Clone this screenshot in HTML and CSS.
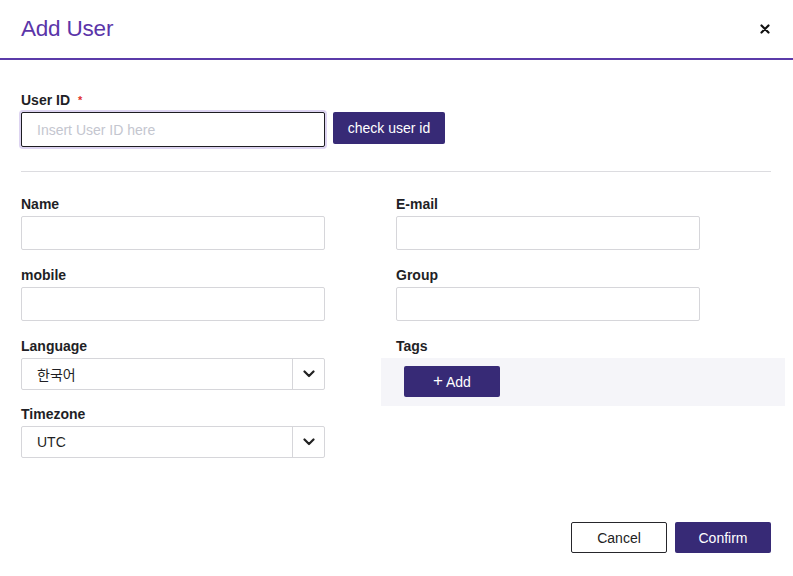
FILE: index.html
```html
<!DOCTYPE html>
<html>
<head>
<meta charset="utf-8">
<link rel="stylesheet" href="styles.css">
</head>
<body>
<div class="modal">
  <header class="modal-header">
    <h1 class="title">Add User</h1>
    <button class="close" aria-label="close">
      <svg width="10" height="10" viewBox="0 0 10 10"><path d="M1.5 1.5 L8.5 8.5 M8.5 1.5 L1.5 8.5" stroke="#111" stroke-width="2.2" stroke-linecap="round"/></svg>
    </button>
  </header>
  <main class="modal-body">
    <div class="field">
      <label class="label">User ID <span class="req">*</span></label>
      <div class="id-row">
        <input class="input input-focus" type="text" placeholder="Insert User ID here">
        <button class="btn btn-primary btn-check">check user id</button>
      </div>
    </div>
    <hr class="divider">
    <div class="cols">
      <div class="col">
        <div class="field">
          <label class="label">Name</label>
          <input class="input" type="text">
        </div>
        <div class="field">
          <label class="label">mobile</label>
          <input class="input" type="text">
        </div>
        <div class="field">
          <label class="label">Language</label>
          <div class="select">
            <span class="select-value">한국어</span>
            <span class="select-arrow"><svg width="12" height="8" viewBox="0 0 12 8"><path d="M1.5 1.5 L6 6 L10.5 1.5" fill="none" stroke="#222" stroke-width="2.2" stroke-linecap="round" stroke-linejoin="round"/></svg></span>
          </div>
        </div>
        <div class="field field-tz">
          <label class="label">Timezone</label>
          <div class="select">
            <span class="select-value">UTC</span>
            <span class="select-arrow"><svg width="12" height="8" viewBox="0 0 12 8"><path d="M1.5 1.5 L6 6 L10.5 1.5" fill="none" stroke="#222" stroke-width="2.2" stroke-linecap="round" stroke-linejoin="round"/></svg></span>
          </div>
        </div>
      </div>
      <div class="col">
        <div class="field">
          <label class="label">E-mail</label>
          <input class="input" type="text">
        </div>
        <div class="field">
          <label class="label">Group</label>
          <input class="input" type="text">
        </div>
        <div class="field">
          <label class="label">Tags</label>
          <div class="tags-box">
            <button class="btn btn-primary btn-add"><span class="plus">+</span>Add</button>
          </div>
        </div>
      </div>
    </div>
  </main>
  <footer class="modal-footer">
    <button class="btn btn-outline">Cancel</button>
    <button class="btn btn-primary btn-confirm">Confirm</button>
  </footer>
</div>
</body>
</html>
```
FILE: styles.css
```css
* { box-sizing: border-box; }
html, body { margin: 0; padding: 0; background: #fff; }
body {
  font-family: "Liberation Sans", Arial, "Noto Sans CJK KR", sans-serif;
  color: #1f1f24;
  width: 793px;
  height: 576px;
  overflow: hidden;
}
.modal {
  display: flex;
  flex-direction: column;
  height: 576px;
}
.modal-header {
  height: 60px;
  border-bottom: 2px solid #5b3ba9;
  display: flex;
  align-items: center;
  justify-content: space-between;
  padding: 0 22px 0 21px;
}
.title {
  margin: 0;
  font-size: 22.5px;
  font-weight: normal;
  color: #5b35a9;
  letter-spacing: -0.2px;
}
.close {
  border: 0;
  background: none;
  padding: 0;
  width: 14px;
  height: 14px;
  display: flex;
  align-items: center;
  justify-content: center;
  margin-right: -1px;
}
.modal-body {
  padding: 32px 22px 0 21px;
}
.field {
  display: flex;
  flex-direction: column;
  gap: 4px;
}
.label {
  font-size: 14px;
  line-height: 16px;
  font-weight: bold;
  color: #1f1f26;
}
.req {
  color: #e0302a;
  font-size: 11px;
  vertical-align: top;
  margin-left: 4px;
}
.id-row {
  display: flex;
  align-items: flex-start;
  gap: 8px;
}
.input {
  width: 304px;
  height: 34px;
  border: 1px solid #d6d6da;
  border-radius: 2px;
  font-family: inherit;
  font-size: 14px;
  padding: 0 15px;
  background: #fff;
  outline: none;
}
.input-focus {
  border-color: #1d1d22;
  box-shadow: 0 0 0 2px #ddd4f1;
  height: 35px;
}
.input::placeholder { color: #c4c6cf; }
.btn {
  font-family: inherit;
  font-size: 14px;
  border-radius: 2px;
  cursor: pointer;
}
.btn-primary {
  background: #372a76;
  color: #fff;
  border: 0;
}
.btn-check {
  width: 112px;
  height: 32px;
  padding: 0;
}
.divider {
  border: 0;
  border-top: 1px solid #dcdce0;
  margin: 24px 0 0 0;
  height: 0;
}
.cols {
  display: grid;
  grid-template-columns: 375px 375px;
  margin-top: 24px;
}
.col {
  display: flex;
  flex-direction: column;
  gap: 17px;
}
.field-tz { margin-top: -1px; }
.select {
  width: 304px;
  height: 32px;
  border: 1px solid #d6d6da;
  border-radius: 2px;
  display: flex;
  align-items: stretch;
}
.select-value {
  flex: 1;
  display: flex;
  align-items: center;
  padding-left: 15px;
  font-size: 14px;
  color: #1f1f24;
}
.select-arrow {
  width: 32px;
  border-left: 1px solid #d6d6da;
  display: flex;
  align-items: center;
  justify-content: center;
}
.tags-box {
  margin-left: -15px;
  width: 404px;
  height: 48px;
  background: #f5f5f9;
  padding: 8px 0 0 23px;
}
.btn-add {
  width: 96px;
  height: 31px;
  padding: 0;
  display: flex;
  align-items: center;
  justify-content: center;
}
.plus {
  font-size: 17px;
  font-weight: 300;
  margin-right: 3px;
  line-height: 1;
  position: relative;
  top: -1px;
}
.modal-footer {
  margin-top: auto;
  display: flex;
  justify-content: flex-end;
  gap: 8px;
  padding: 0 22px 23px 0;
}
.btn-outline {
  width: 96px;
  height: 31px;
  background: #fff;
  border: 1px solid #26262b;
  color: #222;
}
.btn-confirm {
  width: 96px;
  height: 31px;
}
```
